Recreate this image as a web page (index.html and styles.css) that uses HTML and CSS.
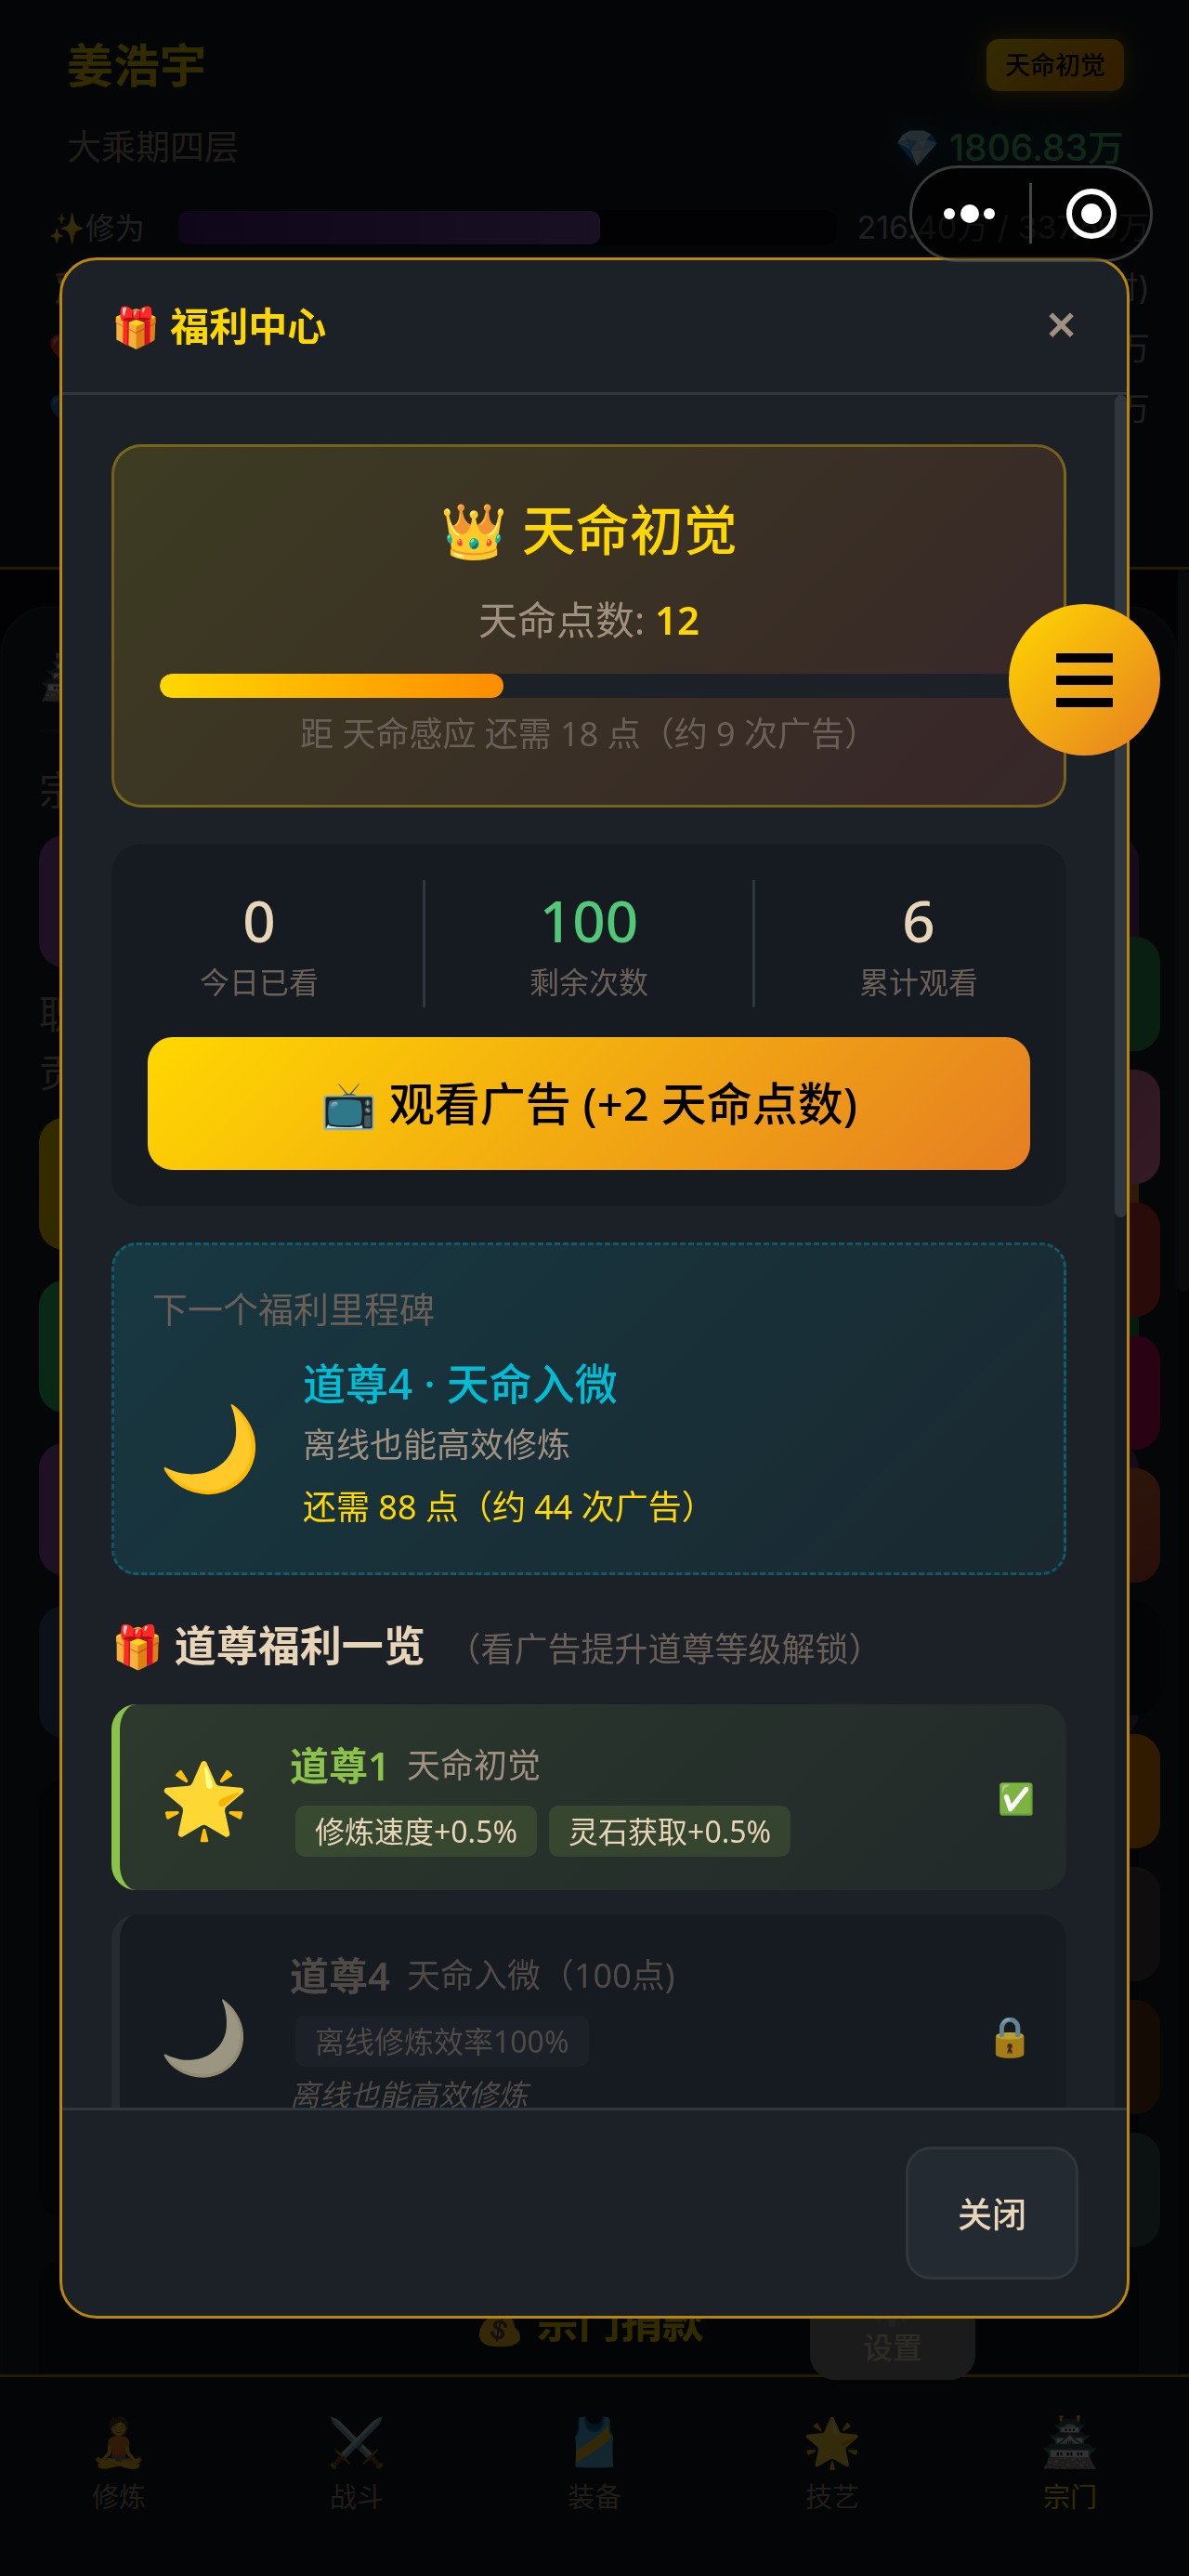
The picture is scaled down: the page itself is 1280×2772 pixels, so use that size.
FILE: index.html
```html
<!DOCTYPE html>
<html lang="zh-CN">

<head>
    <meta charset="UTF-8">
    <meta name="viewport" content="width=device-width, initial-scale=1.0">
    <title>福利中心</title>
    <link rel="stylesheet" href="styles.css">
</head>

<body>

    <div class="app">

        <header class="player">
            <div class="player-row">
                <h1 class="player-name">姜浩宇</h1>
                <span class="player-badge">天命初觉</span>
            </div>
            <div class="player-row realm-row">
                <span class="realm">大乘期四层</span>
                <span class="stones">💎 1806.83万</span>
            </div>

            <div class="stats">
                <div class="stat-row">
                    <span>✨修为</span>
                    <div class="stat-bar"><div class="stat-fill" style="width: 64%"></div></div>
                    <span class="stat-value">216.40万 / 337.50万</span>
                </div>
                <div class="stat-row">
                    <span>⏳</span>
                    <span></span>
                    <span class="stat-value">时)</span>
                </div>
                <div class="stat-row">
                    <span>❤️</span>
                    <span></span>
                    <span class="stat-value">万</span>
                </div>
                <div class="stat-row">
                    <span>💙</span>
                    <span></span>
                    <span class="stat-value">万</span>
                </div>
            </div>
        </header>

        <main class="page">
            <div class="panel">
                <h2 class="panel-title">🏯</h2>
                <p class="panel-text">宗</p>
                <div class="panel-btn purple"></div>
                <p class="panel-text">职</p>
                <p class="panel-text">贡</p>
                <div class="panel-list">
                    <div class="panel-btn gold"></div>
                    <div class="panel-btn green"></div>
                    <div class="panel-btn purple"></div>
                    <div class="panel-btn navy"></div>
                </div>
                <div class="sub-card"></div>
                <div class="sub-card">
                    <h3 class="donate-title">💰 宗门捐款</h3>
                </div>
            </div>
            <div class="page-scroll"><div class="page-thumb"></div></div>
        </main>

        <nav class="tabs">
            <a class="tab" href="#practice"><span class="tab-icon">🧘</span>修炼</a>
            <a class="tab" href="#battle"><span class="tab-icon">⚔️</span>战斗</a>
            <a class="tab" href="#equip"><span class="tab-icon">🎽</span>装备</a>
            <a class="tab" href="#skills"><span class="tab-icon">🌟</span>技艺</a>
            <a class="tab active" href="#sect"><span class="tab-icon">🏯</span>宗门</a>
        </nav>

        <div class="tools">
            <div class="tool tool-green"></div>
            <div class="tool tool-pink"></div>
            <div class="tool tool-red"></div>
            <div class="tool tool-rose"></div>
            <div class="tool tool-orange"></div>
            <div class="tool tool-black"></div>
            <div class="tool tool-amber"></div>
            <div class="tool tool-gray"></div>
            <div class="tool tool-brown"></div>
            <div class="tool tool-slate"></div>
        </div>
        <button class="tool settings" type="button"><span class="settings-icon">⚙️</span>设置</button>
    </div>

    <div class="overlay">
        <section class="modal" role="dialog" aria-labelledby="modalTitle">
            <div class="modal-header">
                <h2 class="modal-title" id="modalTitle">🎁 福利中心</h2>
                <button class="modal-x" type="button">✕</button>
            </div>

            <div class="modal-main">
                <div class="modal-body">

                    <div class="destiny">
                        <h3 class="destiny-name">👑 天命初觉</h3>
                        <p class="destiny-points">天命点数: <b>12</b></p>
                        <div class="destiny-bar"><div class="destiny-fill" style="width: 40%"></div></div>
                        <p class="destiny-next">距 天命感应 还需 18 点（约 9 次广告）</p>
                    </div>

                    <div class="ads">
                        <div class="counts">
                            <div class="count"><b>0</b><span>今日已看</span></div>
                            <div class="count-line"></div>
                            <div class="count left"><b>100</b><span>剩余次数</span></div>
                            <div class="count-line"></div>
                            <div class="count"><b>6</b><span>累计观看</span></div>
                        </div>
                        <button class="watch-btn" type="button">📺 观看广告 (+2 天命点数)</button>
                    </div>

                    <div class="milestone">
                        <p class="milestone-label">下一个福利里程碑</p>
                        <div class="milestone-row">
                            <span class="milestone-icon">🌙</span>
                            <div>
                                <h3 class="milestone-name">道尊4 · 天命入微</h3>
                                <p class="milestone-desc">离线也能高效修炼</p>
                                <p class="milestone-need">还需 88 点（约 44 次广告）</p>
                            </div>
                        </div>
                    </div>

                    <h3 class="list-title">🎁 道尊福利一览 <small>（看广告提升道尊等级解锁）</small></h3>

                    <div class="perk unlocked">
                        <span class="perk-icon">🌟</span>
                        <div class="perk-info">
                            <p class="perk-head"><b>道尊1</b><span>天命初觉</span></p>
                            <div class="tags">
                                <span class="tag">修炼速度+0.5%</span>
                                <span class="tag">灵石获取+0.5%</span>
                            </div>
                        </div>
                        <span class="perk-check">✅</span>
                    </div>

                    <div class="perk locked">
                        <span class="perk-icon">🌙</span>
                        <div class="perk-info">
                            <p class="perk-head"><b>道尊4</b><span>天命入微（100点)</span></p>
                            <div class="tags">
                                <span class="tag">离线修炼效率100%</span>
                            </div>
                            <p class="perk-desc">离线也能高效修炼</p>
                        </div>
                        <span class="perk-lock">🔒</span>
                    </div>

                </div>
                <div class="modal-scroll"><div class="modal-thumb"></div></div>
            </div>

            <div class="modal-footer">
                <button class="close-btn" type="button">关闭</button>
            </div>
        </section>
    </div>

    <button class="menu-btn" type="button" aria-label="菜单">
        <span></span>
        <span></span>
        <span></span>
    </button>

    <div class="capsule">
        <svg width="256" height="98" viewBox="0 0 256 98">
            <g fill="#fff">
                <circle cx="40" cy="49" r="6" />
                <circle cx="62" cy="49" r="10" />
                <circle cx="83" cy="49" r="6" />
                <circle cx="193" cy="49" r="11" />
            </g>
            <path d="M127.500 16V81" stroke="#444" stroke-width="3" />
            <circle cx="193" cy="49" r="24" fill="none" stroke="#fff" stroke-width="6" />
        </svg>
    </div>

</body>

</html>
```
FILE: styles.css
```css
* {
    box-sizing: border-box;
}

body {
    margin: 0;
    background: #0a0e14;
    color: #e8d5b7;
    font-family: "Noto Sans", "Noto Sans CJK SC", "Noto Color Emoji", sans-serif;
    font-size: 36px;
}

h1,
h2,
h3,
p {
    margin: 0;
}

button {
    font-family: inherit;
    cursor: pointer;
}

/* game page behind the dialog */
.app {
    position: relative;
    display: flex;
    flex-direction: column;
    height: 100vh;
    overflow: hidden;
}

.player {
    flex: none;
    padding: 42px 0 150px;
    background: #161b22;
    border-bottom: 3px solid #b8860b;
}

.player-row {
    display: flex;
    justify-content: space-between;
    align-items: center;
    height: 56px;
    padding: 0 70px 0 72px;
}

.realm-row {
    margin-top: 30px;
}

.player-name {
    font-size: 50px;
    line-height: 56px;
    color: #ffd700;
}

.player-badge {
    padding: 0 20px;
    border-radius: 13px;
    background: linear-gradient(135deg, #ffd700, #ff8c00);
    box-shadow: 0 0 26px rgba(255, 215, 0, 0.5);
    color: #000;
    font-size: 27px;
    font-weight: 500;
    line-height: 56px;
}

.realm {
    color: #a09080;
    font-size: 37px;
}

.stones {
    color: #50c878;
    font-family: Inter, "Noto Sans CJK SC", "Noto Color Emoji", sans-serif;
    font-size: 39px;
    font-weight: 500;
    text-shadow: 0 0 26px rgba(0, 188, 212, 0.5);
}

.stats {
    display: flex;
    flex-direction: column;
    gap: 25px;
    margin-top: 41px;
    padding: 0 42px 0 52px;
    color: #a0a0b0;
    font-size: 32px;
}

.stat-row {
    display: grid;
    grid-template-columns: 139px 1fr 336px;
    align-items: center;
    height: 40px;
    line-height: 40px;
    white-space: nowrap;
}

.stat-bar {
    height: 40px;
    padding: 1px 0;
    border-radius: 12px;
    background: #0a0e14;
    border: 1px solid #1c2128;
}

.stat-fill {
    height: 100%;
    border-radius: 10px;
    background: linear-gradient(90deg, #4b2080, #8050b0);
}

.stat-value {
    font-family: Inter, "Noto Sans CJK SC", sans-serif;
    font-size: 34px;
    text-align: right;
}

.page {
    display: flex;
    flex: 1;
    min-height: 0;
    overflow: hidden;
}

.panel {
    flex: 1;
    height: 2000px;
    margin-top: 39px;
    padding: 30px 39px;
    background: #1c2128;
    border: 3px solid #262b32;
    border-radius: 53px;
}

.panel-title {
    height: 103px;
    padding-top: 4px;
    border-bottom: 3px solid #30363d;
    font-size: 46px;
    line-height: 76px;
}

.panel-text {
    margin-top: 7px;
    color: #a09080;
    font-size: 42px;
    line-height: 56px;
}

.panel-title + .panel-text {
    margin: 34px 0 21px;
}

.panel-btn + .panel-text {
    margin-top: 22px;
}

.panel-btn {
    height: 142px;
    border-radius: 27px;
}

.panel-list {
    display: flex;
    flex-direction: column;
    gap: 33px;
    margin-top: 21px;
}

.purple {
    background: linear-gradient(135deg, #9b59b6, #6c3483);
}

.gold {
    background: linear-gradient(135deg, #ffd700, #e67e22);
}

.green {
    background: linear-gradient(135deg, #2ecc71, #1e8449);
}

.navy {
    background: linear-gradient(135deg, #34567a, #4a3b7a);
}

.sub-card {
    height: 471px;
    margin-top: 45px;
    padding: 36px;
    background: #12161c;
    border-radius: 27px;
}

.donate-title {
    color: #ffd700;
    font-size: 45px;
    line-height: 64px;
    text-align: center;
}

.page-scroll {
    width: 12px;
    background: #12161c;
}

.page-thumb {
    height: 40%;
    border-radius: 6px;
    background: #30363d;
}

.tabs {
    display: flex;
    flex: none;
    height: 217px;
    padding-top: 28px;
    background: #161b22;
    border-top: 3px solid #b8860b;
}

.tab {
    display: flex;
    flex: 1;
    flex-direction: column;
    align-items: center;
    color: #a09080;
    font-size: 29px;
    line-height: 42px;
    text-decoration: none;
}

.tab.active {
    color: #ffd700;
}

.tab-icon {
    font-size: 51px;
    line-height: 80px;
}

/* floating shortcuts on the right edge */
.tools {
    position: absolute;
    top: 1008px;
    right: 31px;
    display: flex;
    flex-direction: column;
    gap: 20px;
}

.tool {
    width: 178px;
    height: 123px;
    border: 0;
    border-radius: 27px;
}

.tool-green { background: #289b5a; }
.tool-pink { background: linear-gradient(135deg, #d96a9a, #ff82b4); }
.tool-red { background: #cd3b2d; }
.tool-rose { background: #cd0f5f; }
.tool-orange { background: linear-gradient(160deg, #e6783c, #c84b32); }
.tool-black { background: #0f1419; }
.tool-amber { background: #f08705; }
.tool-gray { background: #4b4346; }
.tool-brown { background: #643719; }
.tool-slate { background: #3c555a; }

.settings {
    position: absolute;
    bottom: 211px;
    right: 230px;
    display: flex;
    flex-direction: column;
    align-items: center;
    padding: 16px 0 0;
    background: #85898a;
    color: #e8d5b7;
    font-size: 32px;
    font-weight: 500;
    line-height: 44px;
}

.settings-icon {
    font-size: 42px;
    line-height: 50px;
}

/* dialog */
.overlay {
    position: fixed;
    inset: 0;
    display: flex;
    align-items: center;
    justify-content: center;
    background: rgba(0, 0, 0, 0.8);
}

.modal {
    display: flex;
    flex-direction: column;
    width: 90%;
    height: 80vh;
    overflow: hidden;
    background: #1c2128;
    border: 3px solid #b8860b;
    border-radius: 40px;
}

.modal-header {
    display: flex;
    flex: none;
    align-items: center;
    justify-content: space-between;
    height: 145px;
    padding: 0 53px 6px;
    border-bottom: 3px solid #30363d;
}

.modal-title {
    color: #ffd700;
    font-size: 42px;
    font-weight: 600;
}

.modal-x {
    padding: 0;
    border: 0;
    background: none;
    color: #a09080;
    font-size: 42px;
    font-weight: 700;
}

.modal-main {
    display: flex;
    flex: 1;
    min-height: 0;
}

.modal-body {
    flex: 1;
    overflow: hidden;
    padding: 53px 52px 0 53px;
}

.modal-scroll {
    width: 13px;
    background: #161b22;
}

.modal-thumb {
    height: 48%;
    border-radius: 7px;
    background: #30363d;
}

.destiny {
    padding: 48px 49px 50px;
    border: 3px solid rgba(255, 215, 0, 0.3);
    border-radius: 32px;
    background: linear-gradient(135deg, rgba(255, 215, 0, 0.15), rgba(255, 80, 50, 0.12));
    text-align: center;
}

.destiny-name {
    color: #ffd700;
    font-size: 58px;
    font-weight: 500;
    line-height: 82px;
}

.destiny-points {
    margin-top: 26px;
    color: #a09080;
    font-size: 42px;
    line-height: 60px;
}

.destiny-points b {
    color: #ffd700;
    font-weight: 600;
}

.destiny-bar {
    height: 26px;
    margin-top: 28px;
    border-radius: 13px;
    background: #1c2128;
    overflow: hidden;
}

.destiny-fill {
    height: 100%;
    border-radius: 13px;
    background: linear-gradient(90deg, #ffd700, #ff8c00);
}

.destiny-next {
    margin-top: 13px;
    color: #6b6058;
    font-size: 36px;
    line-height: 52px;
}

.ads {
    margin-top: 39px;
    padding: 39px;
    border-radius: 32px;
    background: #161b22;
}

.counts {
    display: flex;
    justify-content: space-around;
    height: 137px;
}

.count {
    display: flex;
    flex-direction: column;
    align-items: center;
    color: #6b6058;
    font-size: 32px;
    line-height: 48px;
}

.count b {
    color: #e8d5b7;
    font-size: 62px;
    font-weight: 500;
    line-height: 86px;
}

.count.left b {
    color: #50c878;
}

.count-line {
    width: 3px;
    background: #30363d;
}

.watch-btn {
    width: 100%;
    height: 143px;
    margin-top: 32px;
    padding: 0 0 6px;
    border: 0;
    border-radius: 27px;
    background: linear-gradient(135deg, #ffd700, #e67e22);
    color: #000;
    font-size: 49px;
    font-weight: 500;
}

.milestone {
    margin-top: 39px;
    padding: 41px 41px 37px;
    border: 3px dashed rgba(0, 188, 212, 0.3);
    border-radius: 27px;
    background: linear-gradient(135deg, rgba(0, 188, 212, 0.15), rgba(0, 188, 212, 0.05));
}

.milestone-label {
    color: #6b6058;
    font-size: 38px;
    line-height: 54px;
}

.milestone-row {
    display: flex;
    align-items: center;
    margin-top: 20px;
}

.milestone-icon {
    width: 162px;
    padding-left: 6px;
    font-size: 90px;
    line-height: 100px;
}

.milestone-name {
    color: #00bcd4;
    font-size: 46px;
    font-weight: 500;
    line-height: 66px;
}

.milestone-desc,
.milestone-need {
    color: #a09080;
    font-size: 36px;
    line-height: 67px;
}

.milestone-need {
    color: #ffd700;
}

.list-title {
    margin: 42px 0 25px;
    font-size: 45px;
    font-weight: 600;
    line-height: 68px;
}

.list-title small {
    margin-left: 12px;
    color: #6b6058;
    font-size: 36px;
    font-weight: 400;
}

.perk {
    display: flex;
    align-items: center;
    margin-bottom: 26px;
    padding: 32px 34px 32px 36px;
    border-left: 9px solid #30363d;
    border-radius: 27px;
    background: #161b22;
}

.perk.unlocked {
    border-left-color: #8bc34a;
    background: linear-gradient(135deg, rgba(139, 195, 74, 0.15), rgba(139, 195, 74, 0.05));
}

.perk-icon {
    width: 147px;
    padding-left: 6px;
    font-size: 78px;
    line-height: 100px;
}

.perk-info {
    flex: 1;
}

.perk-head {
    display: flex;
    align-items: center;
    gap: 18px;
    height: 62px;
    color: #a09080;
    font-size: 36px;
}

.perk-head b {
    color: #8bc34a;
    font-size: 42px;
    font-weight: 600;
}

.tags {
    display: flex;
    gap: 13px;
    margin: 15px 0 4px 6px;
}

.tag {
    padding: 0 21px;
    border-radius: 10px;
    background: rgba(139, 195, 74, 0.15);
    font-size: 32px;
    line-height: 55px;
}

.perk-check {
    font-size: 32px;
}

.perk-lock {
    font-size: 42px;
}

.locked {
    border-left-color: #262b32;
}

.locked .perk-icon {
    filter: grayscale(80%);
    opacity: 0.7;
}

.locked .perk-head,
.locked .perk-head b,
.locked .tag,
.locked .perk-desc {
    color: #4f4a45;
}

.locked .tag {
    background: #1c2028;
}

.perk-desc {
    margin: 1px 0 7px;
    font-size: 32px;
    font-style: italic;
    line-height: 52px;
}

.locked .perk-lock {
    opacity: 0.7;
}

.modal-footer {
    flex: none;
    height: 224px;
    padding: 39px 52px;
    border-top: 3px solid #30363d;
    text-align: right;
}

.close-btn {
    width: 186px;
    height: 143px;
    border: 3px solid #30363d;
    border-radius: 27px;
    background: #242a32;
    color: #e8d5b7;
    font-size: 37px;
    font-weight: 500;
}

/* floating menu button */
.menu-btn {
    position: fixed;
    top: 650px;
    right: 31px;
    display: flex;
    flex-direction: column;
    align-items: center;
    justify-content: center;
    gap: 14px;
    width: 163px;
    height: 163px;
    border: 0;
    border-radius: 50%;
    background: linear-gradient(135deg, #ffd700, #e67e22);
}

.menu-btn span {
    width: 61px;
    height: 10px;
    background: #000;
}

.capsule {
    position: fixed;
    top: 178px;
    right: 39px;
    width: 262px;
    height: 104px;
    border: 3px solid rgba(255, 255, 255, 0.22);
    border-radius: 52px;
    background: rgba(0, 0, 0, 0.5);
}

.capsule svg {
    display: block;
}
```
